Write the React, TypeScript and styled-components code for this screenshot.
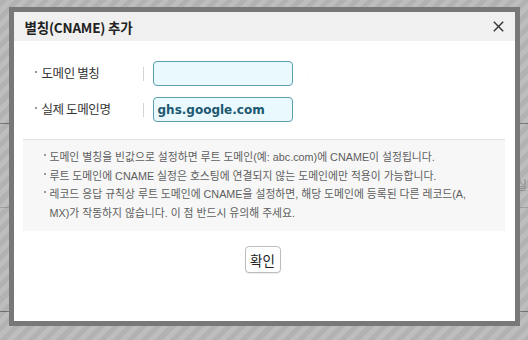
import React from "react";
import styled, { createGlobalStyle } from "styled-components";

const GlobalStyle = createGlobalStyle`
  html, body { margin: 0; padding: 0; }
  body {
    width: 528px;
    height: 340px;
    overflow: hidden;
    background: #ffffff;
    font-family: "Liberation Sans", "Noto Sans CJK KR", sans-serif;
  }
`;

const Page = styled.div`
  position: relative;
  width: 528px;
  height: 340px;
  overflow: hidden;
  background: #ffffff;
`;

const BgRow = styled.div<{ $h: number; $line: string }>`
  height: ${(p) => p.$h}px;
  border-bottom: 1px solid ${(p) => p.$line};
  display: flex;
  justify-content: flex-end;
  align-items: flex-end;
  box-sizing: border-box;
`;

const BgCell = styled.span`
  font-family: "Noto Sans CJK KR", sans-serif;
  font-size: 12px;
  color: #c8c8c8;
  white-space: nowrap;
  width: 12px;
  overflow: hidden;
  margin-bottom: 14px;
`;

const Overlay = styled.div`
  position: absolute;
  inset: 0;
  display: flex;
  justify-content: center;
  align-items: flex-start;
  padding-top: 7px;
  box-sizing: border-box;
  background: repeating-linear-gradient(
    135deg,
    rgba(0, 0, 0, 0.3) 0 5px,
    rgba(0, 0, 0, 0.26) 5px 10px
  );
`;

const Dialog = styled.div`
  width: 511px;
  height: 319px;
  box-sizing: border-box;
  border: 5px solid #787878;
  background: #ffffff;
  display: flex;
  flex-direction: column;
`;

const Header = styled.div`
  height: 29px;
  background: #f0f0f0;
  display: flex;
  align-items: center;
  justify-content: space-between;
  padding: 0 10px 0 11px;
`;

const Title = styled.h1`
  margin: 0;
  font-family: "Noto Sans CJK KR", sans-serif;
  font-size: 13.5px;
  font-weight: 700;
  color: #222;
  letter-spacing: -0.2px;
`;

const CloseButton = styled.button`
  border: 0;
  background: none;
  padding: 0;
  width: 12px;
  height: 12px;
  display: flex;
  align-items: center;
  justify-content: center;
  cursor: pointer;
`;

const Body = styled.div`
  display: flex;
  flex-direction: column;
  padding-top: 20px;
`;

const Form = styled.div`
  display: flex;
  flex-direction: column;
  gap: 11px;
  padding-left: 21px;
`;

const FieldRow = styled.div`
  display: flex;
  align-items: center;
  height: 25px;
`;

const Label = styled.label`
  width: 108px;
  display: flex;
  align-items: center;
  gap: 5px;
  margin-top: -3px;
  font-family: "Noto Sans CJK KR", sans-serif;
  font-size: 12.5px;
  color: #333;
  letter-spacing: -0.4px;
`;

const Bullet = styled.span`
  width: 2px;
  height: 2px;
  background: #9a9a9a;
  flex-shrink: 0;
`;

const Divider = styled.span`
  width: 1px;
  height: 14px;
  background: #d4d4d4;
  margin-right: 9px;
`;

const Input = styled.div`
  width: 140px;
  height: 25px;
  box-sizing: border-box;
  border: 1px solid #5b9fb0;
  border-radius: 4px;
  background: #e9f9fe;
  padding: 0 4px;
  display: flex;
  align-items: center;
  font-family: "DejaVu Sans", Verdana, sans-serif;
  font-size: 12px;
  font-weight: 700;
  color: #1c5870;
`;

const Ghost = styled.span`
  font-family: "Noto Sans CJK KR", sans-serif;
  font-size: 11px;
  color: #f3f6f8;
  margin-left: 12px;
`;

const Notice = styled.ul`
  list-style: none;
  margin: 17px 10px 0 9px;
  padding: 8px 12px 9px 21px;
  background: #f7f7f7;
  border-top: 1px solid #e3e3e3;
  display: flex;
  flex-direction: column;
`;

const NoticeItem = styled.li`
  display: flex;
  align-items: flex-start;
  font-family: "Liberation Sans", "Noto Sans CJK KR", sans-serif;
  font-size: 10.8px;
  line-height: 18.5px;
  color: #5e5e5e;
`;

const NoticeBullet = styled.span`
  width: 2px;
  height: 2px;
  background: #9a9a9a;
  flex-shrink: 0;
  margin: 6px 4px 0 0;
`;

const Actions = styled.div`
  display: flex;
  justify-content: center;
  margin-top: 15px;
  padding-right: 3px;
`;

const ConfirmButton = styled.button`
  width: 36px;
  height: 27px;
  box-sizing: border-box;
  border: 1px solid #bdbdbd;
  border-radius: 4px;
  background: #ffffff;
  box-shadow: 0 1px 1px rgba(0, 0, 0, 0.08);
  font-family: "Noto Sans CJK KR", sans-serif;
  font-size: 13.5px;
  color: #222;
  padding: 0;
  cursor: pointer;
`;

const notices: string[][] = [
  ["도메인 별칭을 빈값으로 설정하면 루트 도메인(예: abc.com)에 CNAME이 설정됩니다."],
  ["루트 도메인에 CNAME 실정은 호스팅에 연결되지 않는 도메인에만 적용이 가능합니다."],
  [
    "레코드 응답 규칙상 루트 도메인에 CNAME을 설정하면, 해당 도메인에 등록된 다른 레코드(A,",
    "MX)가 작동하지 않습니다. 이 점 반드시 유의해 주세요.",
  ],
];

export default function App() {
  return (
    <>
      <GlobalStyle />
      <Page>
        <BgRow $h={124} $line="#a0a0a0" />
        <BgRow $h={84} $line="#d6d6d6">
          <BgCell>실제</BgCell>
        </BgRow>
        <BgRow $h={104} $line="#a0a0a0" />
        <Overlay>
          <Dialog>
            <Header>
              <Title>별칭(CNAME) 추가</Title>
              <CloseButton aria-label="닫기">
                <svg width="11" height="11" viewBox="0 0 11 11">
                  <path d="M0.8 0.8 L10.2 10.2 M10.2 0.8 L0.8 10.2" stroke="#333" strokeWidth="1.4" fill="none" />
                </svg>
              </CloseButton>
            </Header>
            <Body>
              <Form>
                <FieldRow>
                  <Label>
                    <Bullet />
                    도메인 별칭
                  </Label>
                  <Divider />
                  <Input />
                  <Ghost>·</Ghost>
                </FieldRow>
                <FieldRow>
                  <Label>
                    <Bullet />
                    실제 도메인명
                  </Label>
                  <Divider />
                  <Input>ghs.google.com</Input>
                </FieldRow>
              </Form>
              <Notice>
                {notices.map((lines) => (
                  <NoticeItem key={lines[0]}>
                    <NoticeBullet />
                    <span>
                      {lines.map((l, i) => (
                        <React.Fragment key={l}>
                          {i > 0 && <br />}
                          {l}
                        </React.Fragment>
                      ))}
                    </span>
                  </NoticeItem>
                ))}
              </Notice>
              <Actions>
                <ConfirmButton>확인</ConfirmButton>
              </Actions>
            </Body>
          </Dialog>
        </Overlay>
      </Page>
    </>
  );
}
